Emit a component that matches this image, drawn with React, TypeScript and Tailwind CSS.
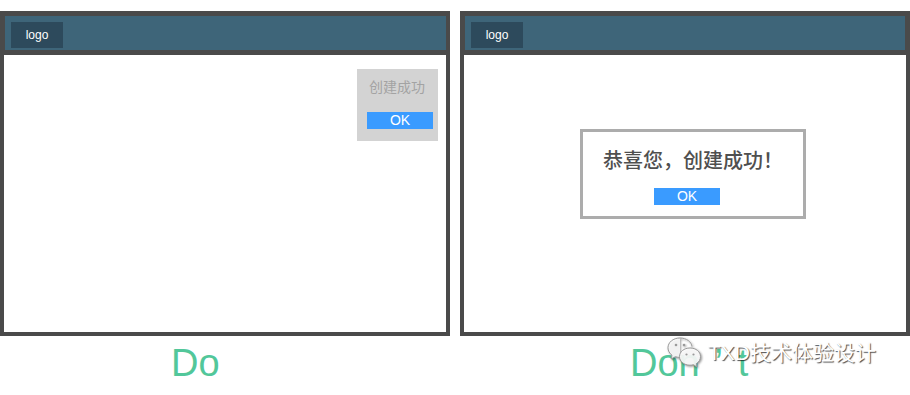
const FONT = "font-['Liberation_Sans','Noto_Sans_CJK_SC',sans-serif]";

function Header() {
  return (
    <div className="h-[34px] bg-[#3e6579] pl-[6px] pt-[6px]">
      <div className="w-[52px] h-[26px] bg-[#2d4a5c] text-white text-[12px] leading-[26px] text-center">logo</div>
    </div>
  );
}

function WeChatIcon() {
  return (
    <svg width="36" height="34" viewBox="0 0 36 34" className="[filter:drop-shadow(1px_1px_1px_rgba(0,0,0,0.45))]">
      <path
        d="M14 2C7 2 2 6.4 2 11.8c0 3 1.6 5.6 4 7.4L5 23l4.4-2.3c1.4.4 3 .7 4.6.7"
        fill="rgba(255,255,255,0.85)"
        stroke="#9a9a9a"
        strokeWidth="1"
      />
      <path d="M14 2c6.4 0 11.6 3.8 12 8.6" fill="none" stroke="#9a9a9a" strokeWidth="1" />
      <circle cx="10" cy="9" r="1.3" fill="#9a9a9a" />
      <circle cx="18" cy="9" r="1.3" fill="#9a9a9a" />
      <path
        d="M24 12c-6 0-10.5 3.8-10.5 8.6s4.5 8.6 10.5 8.6c1.2 0 2.4-.2 3.5-.5L31 31l-.8-3.2c2.6-1.6 4.3-4.2 4.3-7.2 0-4.8-4.5-8.6-10.5-8.6z"
        fill="rgba(255,255,255,0.9)"
        stroke="#9a9a9a"
        strokeWidth="1"
      />
      <circle cx="20.5" cy="18.5" r="1.1" fill="#9a9a9a" />
      <circle cx="27.5" cy="18.5" r="1.1" fill="#9a9a9a" />
    </svg>
  );
}

export default function App() {
  return (
    <div className={`w-[910px] h-[395px] bg-white relative overflow-hidden ${FONT}`}>
      <div className="flex gap-[10px] pt-[11px]">
        {/* Do */}
        <div className="w-[450px] h-[325px] bg-[#4a4a4a] pt-[5px] pb-[4px] px-[4px] flex flex-col gap-[5px]">
          <div className="pl-[1px]">
            <Header />
          </div>
          <div className="flex-1 bg-white flex justify-end items-start pt-[14px] pr-[8px]">
            <div className="w-[81px] h-[72px] bg-[#d3d3d3] flex flex-col pt-[9px]">
              <div className="text-[14px] leading-[18px] text-[#a3a3a3] pl-[12px]">创建成功</div>
              <div className="mt-[16px] ml-[10px] w-[66px] h-[17px] bg-[#3a9bff] text-white text-[14px] leading-[17px] text-center">OK</div>
            </div>
          </div>
        </div>

        {/* Don't */}
        <div className="w-[450px] h-[325px] bg-[#4a4a4a] pt-[5px] pb-[4px] px-[4px] flex flex-col gap-[5px]">
          <div className="px-[1px]">
            <Header />
          </div>
          <div className="flex-1 bg-white pt-[74px] pl-[116px]">
            <div className="w-[226px] h-[90px] border-[3px] border-[#acacac] bg-white flex flex-col items-center pt-[16px]">
              <div className="text-[20px] leading-[26px] font-medium text-[#4f4f4f]">恭喜您，创建成功！</div>
              <div className="mt-[14px] mr-[12px] w-[66px] h-[17px] bg-[#3a9bff] text-white text-[14px] leading-[17px] text-center">OK</div>
            </div>
          </div>
        </div>
      </div>

      <div className="flex pt-[8px]">
        <div className="w-[460px] pl-[171px]">
          <span className="text-[38px] leading-[38px] text-[#52c79a]">Do</span>
        </div>
        <div className="pl-[170px]">
          <span className="text-[38px] leading-[38px] text-[#52c79a] whitespace-nowrap">
            Don<span className="inline-block w-[38px] text-center">’</span>t
          </span>
        </div>
      </div>

      {/* watermark */}
      <div className="absolute left-[666px] top-[336px] flex items-center gap-[6px]">
        <WeChatIcon />
        <span className="text-[21px] leading-[26px] text-white [text-shadow:1px_1px_1px_rgba(0,0,0,0.7)]">
          TXD技术体验设计
        </span>
      </div>
    </div>
  );
}
